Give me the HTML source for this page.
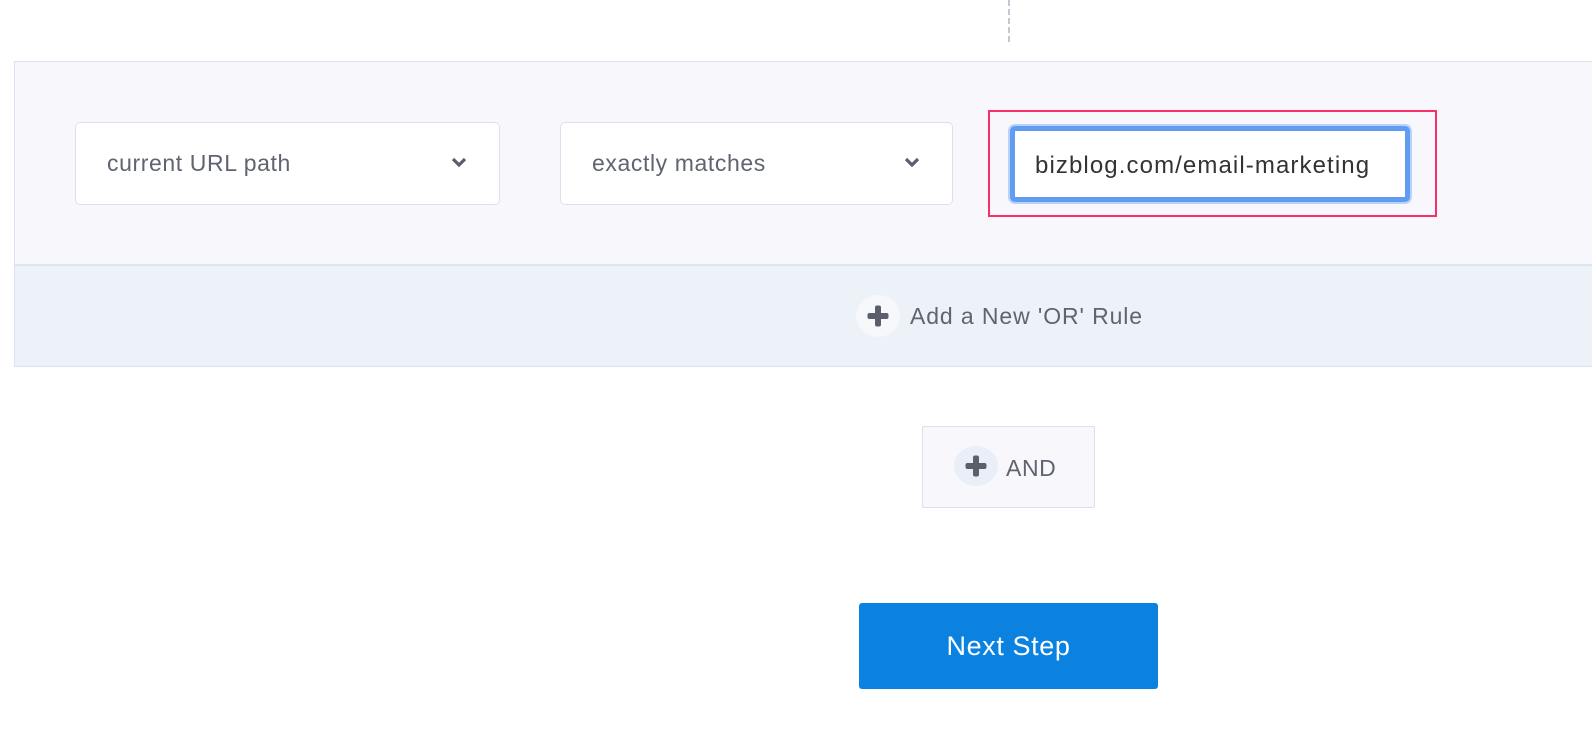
<!DOCTYPE html>
<html><head><style>
body{margin:0;width:1592px;height:740px;background:#fff;font-family:"Liberation Sans",sans-serif;position:relative;overflow:hidden;letter-spacing:0.6px}
.a{position:absolute;box-sizing:border-box}
.sel{background:#fff;border:1px solid #d9e1ee;border-radius:5px;color:#5f6470;font-size:23px;padding-left:31px;line-height:80px}
.plus{border-radius:50%;}
.plus:before,.plus:after{content:"";position:absolute;background:#5a5f6b;border-radius:2px;left:50%;top:50%;transform:translate(-50%,-50%)}
.plus:before{width:21px;height:6px}.plus:after{width:6px;height:21px}
</style></head><body>
<div class="a" style="left:1008px;top:0;height:42px;border-left:2px dashed #c4c8d0"></div>
<div class="a" style="left:14px;top:61px;width:1600px;height:306px;border:1px solid #dbe3ef;background:#f8f8fc"></div>
<div class="a" style="left:15px;top:264px;width:1600px;height:102px;background:#edf1f8;border-top:2px solid #dde5f0"></div>
<div class="a sel" style="left:75px;top:122px;width:425px;height:83px">current URL path</div>
<svg class="a" style="left:450px;top:156px" width="18" height="14"><path d="M3 3l6 6 6-6" stroke="#5a5f6b" stroke-width="3.2" fill="none"/></svg>
<div class="a sel" style="left:560px;top:122px;width:393px;height:83px">exactly matches</div>
<svg class="a" style="left:903px;top:156px" width="18" height="14"><path d="M3 3l6 6 6-6" stroke="#5a5f6b" stroke-width="3.2" fill="none"/></svg>
<div class="a" style="left:988px;top:110px;width:449px;height:107px;border:2px solid #f7306a"></div>
<div class="a" style="left:1010px;top:126px;width:400px;height:76px;border:5px solid #5f9cf2;border-radius:5px;box-shadow:0 0 0 2px #b9d2fa;background:#fff;color:#333;font-size:24px;line-height:70px;padding-left:20px;letter-spacing:1.1px;white-space:nowrap;overflow:hidden">bizblog.com/email-marketing</div>
<div class="a plus" style="left:856px;top:295px;width:44px;height:42px;background:#f7f8fc"></div>
<div class="a" style="left:910px;top:303px;font-size:23px;color:#5f6470;letter-spacing:0.9px">Add a New 'OR' Rule</div>
<div class="a" style="left:922px;top:426px;width:173px;height:82px;background:#f8f8fc;border:1px solid #d9e1ee;border-radius:2px"></div>
<div class="a plus" style="left:954px;top:446px;width:44px;height:40px;background:#e9eef7"></div>
<div class="a" style="left:1006px;top:455px;font-size:23px;color:#5f6470">AND</div>
<div class="a" style="left:859px;top:603px;width:299px;height:86px;background:#0b82e0;border-radius:3px;color:#fff;font-size:27px;text-align:center;line-height:86px">Next Step</div>
</body></html>
